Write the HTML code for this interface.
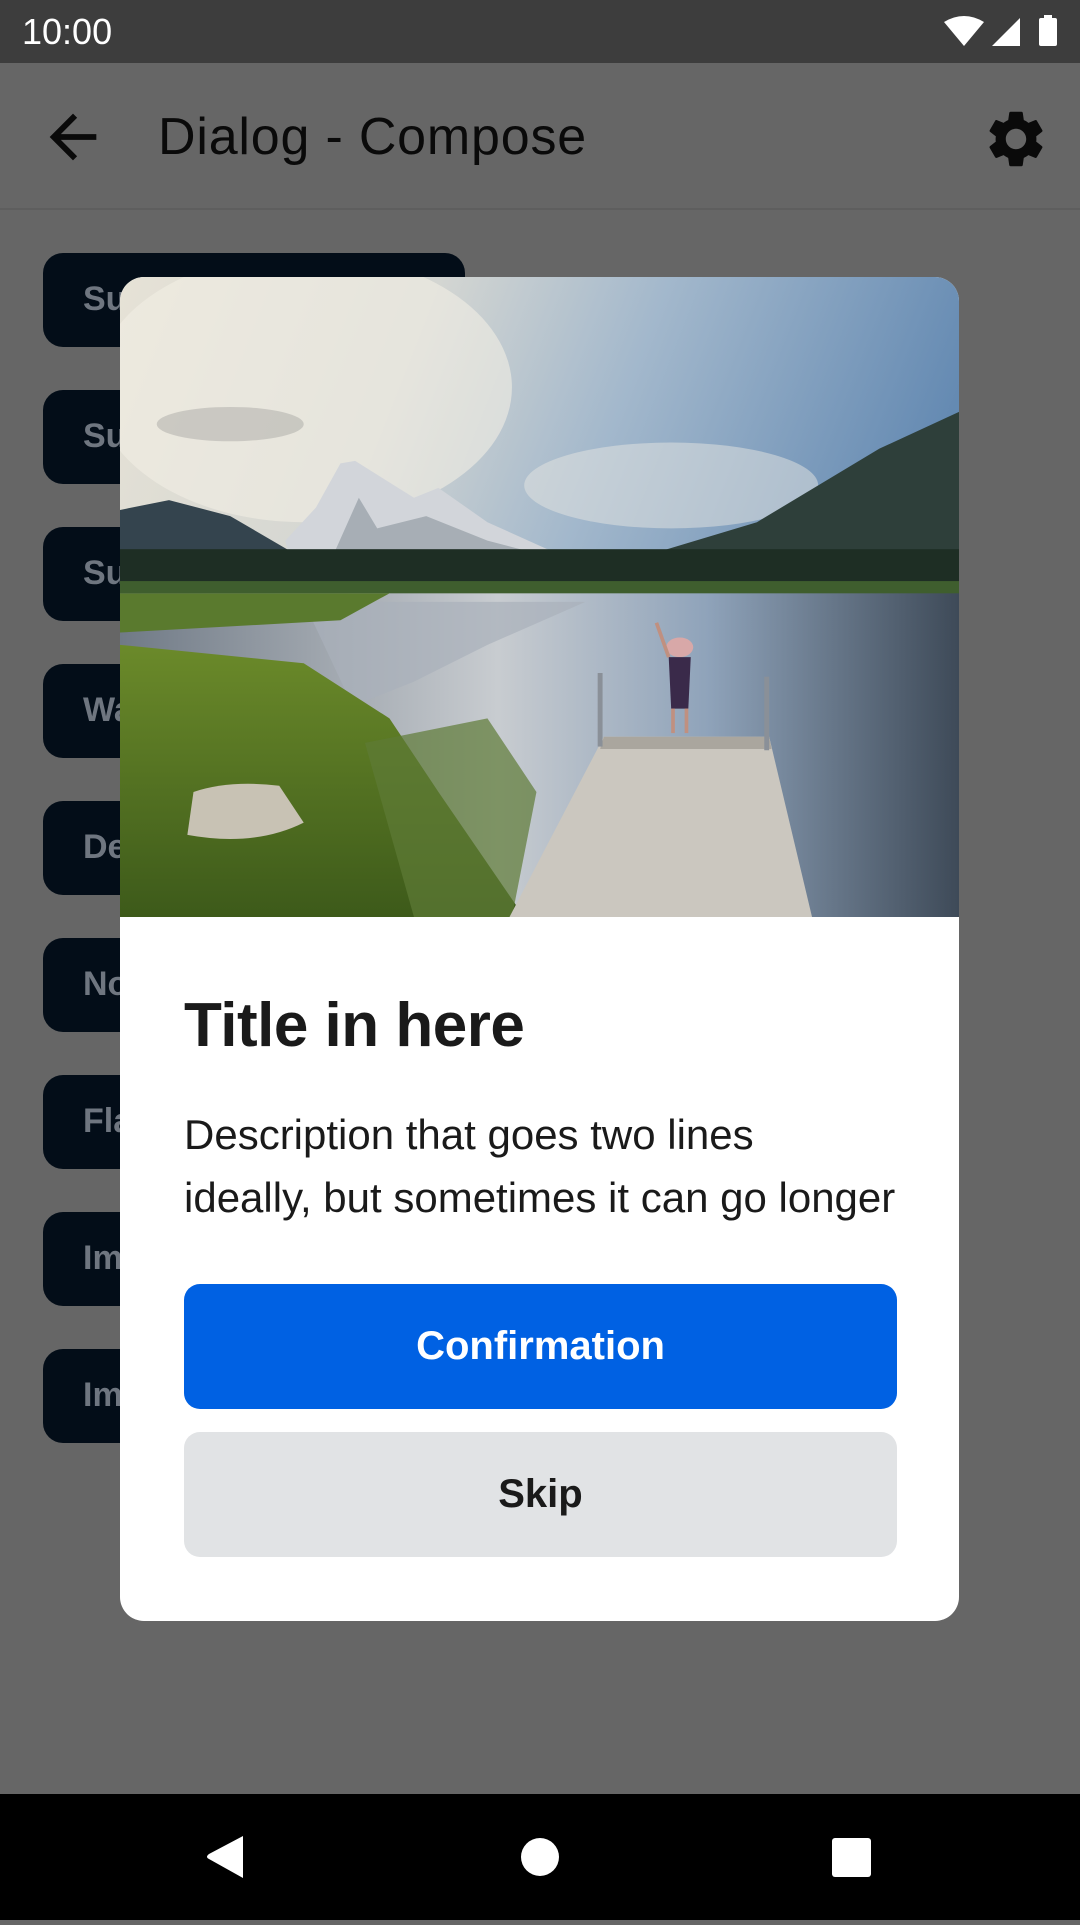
<!DOCTYPE html>
<html><head><meta charset="utf-8">
<style>
*{margin:0;padding:0;box-sizing:border-box}
body{width:1080px;height:1920px;overflow:hidden;background:#666;font-family:"Liberation Sans",sans-serif;position:relative}
.status{position:absolute;left:0;top:0;width:1080px;height:63px;background:#3d3d3d;color:#fff;font-size:36px}
.status .t{position:absolute;left:22px;top:11px}
.appbar{position:absolute;left:0;top:63px;width:1080px;height:147px;background:#666;border-bottom:2px solid #5e5e5e}
.appbar .title{position:absolute;left:158px;top:44px;font-size:52px;color:#0a0a0a;letter-spacing:0.8px}
.btn{position:absolute;left:43px;width:422px;height:94px;background:#030d18;border-radius:20px;color:#6f7680;font-size:34px;font-weight:bold;padding:27px 0 0 40px}
.dialog{position:absolute;left:120px;top:277px;width:839px;height:1344px;background:#fff;border-radius:24px;overflow:hidden}
.dialog h1{position:absolute;left:64px;top:713px;font-size:62px;color:#1a1a1a;font-weight:bold;letter-spacing:-0.5px}
.dialog p{position:absolute;left:64px;top:826px;font-size:42px;line-height:63px;color:#1a1a1a;white-space:nowrap;letter-spacing:0px}
.cb{position:absolute;left:64px;top:1007px;width:713px;height:125px;background:#0061e3;border-radius:16px;color:#fff;font-size:40px;font-weight:bold;text-align:center;line-height:125px}
.sb{position:absolute;left:64px;top:1155px;width:713px;height:125px;background:#e1e3e5;border-radius:16px;color:#1a1a1a;font-size:40px;font-weight:bold;text-align:center;line-height:125px}
.nav{position:absolute;left:0;top:1794px;width:1080px;height:126px;background:#000}
</style></head><body>
<div class="status"><span class="t">10:00</span>
<svg style="position:absolute;left:940px;top:14px" width="130" height="34" viewBox="0 0 130 34">
<path d="M4 8 Q24 -4 44 8 L24 32 Z" fill="#fff"/>
<path d="M52 32 L80 4 L80 32 Z" fill="#fff"/>
<rect x="99" y="4" width="18" height="28" rx="2" fill="#fff"/><rect x="104" y="1" width="8" height="4" fill="#fff"/>
</svg></div>
<div class="appbar">
<svg style="position:absolute;left:38px;top:39px" width="70" height="70" viewBox="0 0 24 24"><path d="M20 11H7.83l5.59-5.59L12 4l-8 8 8 8 1.41-1.41L7.83 13H20v-2z" fill="#0a0a0a"/></svg>
<div class="title">Dialog - Compose</div>
<svg style="position:absolute;left:982px;top:42px" width="68" height="68" viewBox="0 0 24 24"><path fill="#0a0a0a" d="M19.14 12.94c.04-.3.06-.61.06-.94 0-.32-.02-.64-.07-.94l2.030-1.58a.49.49 0 00.12-.61l-1.92-3.32a.488.488 0 00-.59-.22l-2.39.96c-.5-.38-1.030-.7-1.62-.94l-.36-2.54a.484.484 0 00-.48-.41h-3.84c-.24 0-.43.17-.47.41l-.36 2.54c-.59.24-1.13.57-1.62.94l-2.39-.96c-.22-.08-.47 0-.59.22L2.740 8.87c-.12.21-.08.47.12.61l2.030 1.58c-.05.3-.09.63-.09.94s.02.64.07.94l-2.030 1.58a.49.49 0 00-.12.61l1.92 3.32c.12.22.37.29.59.22l2.39-.96c.5.38 1.030.7 1.62.94l.36 2.54c.05.24.24.41.48.41h3.84c.24 0 .44-.17.47-.41l.36-2.54c.59-.24 1.13-.56 1.62-.94l2.39.96c.22.08.47 0 .59-.22l1.92-3.32c.12-.22.07-.47-.12-.61l-2.01-1.58zM12 15.6c-1.98 0-3.6-1.62-3.6-3.6s1.62-3.6 3.6-3.6 3.6 1.62 3.6 3.6-1.62 3.6-3.6 3.6z"/></svg>
</div>
<div class="btn" style="top:253px">Su</div>
<div class="btn" style="top:390px">Su</div>
<div class="btn" style="top:527px">Su</div>
<div class="btn" style="top:664px">Wa</div>
<div class="btn" style="top:801px">De</div>
<div class="btn" style="top:938px">No</div>
<div class="btn" style="top:1075px">Fla</div>
<div class="btn" style="top:1212px">Im</div>
<div class="btn" style="top:1349px">Im</div>

<div class="dialog">
<svg width="839" height="640" viewBox="0 0 685 522" preserveAspectRatio="none" style="position:absolute;left:0;top:0">
<defs>
<linearGradient id="sky" x1="0" y1="0" x2="1" y2="0.3"><stop offset="0" stop-color="#e6e2d6"/><stop offset="0.35" stop-color="#d4d6d2"/><stop offset="0.6" stop-color="#a3b8cc"/><stop offset="1" stop-color="#5f86b0"/></linearGradient>
<linearGradient id="water" x1="0" y1="0" x2="1" y2="0"><stop offset="0" stop-color="#707a86"/><stop offset="0.45" stop-color="#c8ccd0"/><stop offset="0.7" stop-color="#8fa3ba"/><stop offset="1" stop-color="#3e4a58"/></linearGradient>
<linearGradient id="grass" x1="0" y1="0" x2="0" y2="1"><stop offset="0" stop-color="#6b8a2a"/><stop offset="1" stop-color="#3d5a1a"/></linearGradient>
</defs>
<rect width="685" height="522" fill="url(#sky)"/>
<ellipse cx="150" cy="90" rx="170" ry="110" fill="#f2eee4" opacity="0.6"/>
<ellipse cx="90" cy="120" rx="60" ry="14" fill="#9a9a98" opacity="0.4"/>
<ellipse cx="450" cy="170" rx="120" ry="35" fill="#e6e6e2" opacity="0.5"/>
<path d="M0 190 L40 182 L90 195 L150 230 L0 235 Z" fill="#34444e"/>
<path d="M135 215 L160 188 L180 152 L192 150 L240 180 L260 172 L300 200 L380 236 L140 236 Z" fill="#d2d5da"/>
<path d="M170 236 L195 180 L210 205 L250 195 L300 215 L380 236 Z" fill="#7c8790" opacity="0.5"/>
<path d="M400 236 L520 200 L620 140 L685 110 L685 245 Z" fill="#2e3f3a"/>
<rect x="0" y="222" width="685" height="28" fill="#1e2e24"/>
<rect x="0" y="248" width="685" height="12" fill="#3f5e2e"/>
<rect x="0" y="258" width="685" height="264" fill="url(#water)"/>
<path d="M150 265 L190 350 L240 330 L300 300 L380 265 Z" fill="#a9b0ba" opacity="0.7"/>
<path d="M0 258 L220 258 L180 280 L0 290 Z" fill="#5a7a2e"/>
<path d="M0 300 L150 315 L220 360 L260 420 L330 522 L0 522 Z" fill="url(#grass)"/>
<path d="M200 380 L300 360 L340 420 L320 522 L240 522 Z" fill="#5e7a36" opacity="0.7"/>
<path d="M60 420 Q90 410 130 415 L150 445 Q110 465 55 455 Z" fill="#c8c2b4"/>
<path d="M395 375 L530 375 L565 522 L318 522 Z" fill="#cbc7bf"/>
<path d="M395 375 L530 375 L532 385 L392 385 Z" fill="#aaa69e"/>
<rect x="390" y="323" width="4" height="60" fill="#8a9098"/>
<rect x="526" y="326" width="4" height="60" fill="#8a9098"/>
<ellipse cx="457" cy="302" rx="11" ry="8" fill="#d8a8a8"/>
<path d="M448 310 L466 310 L464 352 L450 352 Z" fill="#3a2a4a"/>
<rect x="450" y="352" width="3" height="20" fill="#c09080"/><rect x="461" y="352" width="3" height="20" fill="#c09080"/>
<path d="M448 310 L438 282" stroke="#c09080" stroke-width="3"/>
</svg>
<h1>Title in here</h1>
<p>Description that goes two lines<br>ideally, but sometimes it can go longer</p>
<div class="cb">Confirmation</div>
<div class="sb">Skip</div>
</div>

<div class="nav">
<svg width="1080" height="126" viewBox="0 0 1080 126">
<path d="M243 42 L243 84 L209 65 Q205 63 209 60 Z" fill="#fff"/>
<circle cx="540" cy="63" r="19" fill="#fff"/>
<rect x="832" y="44" width="39" height="39" rx="3" fill="#fff"/>
</svg></div>
</body></html>
